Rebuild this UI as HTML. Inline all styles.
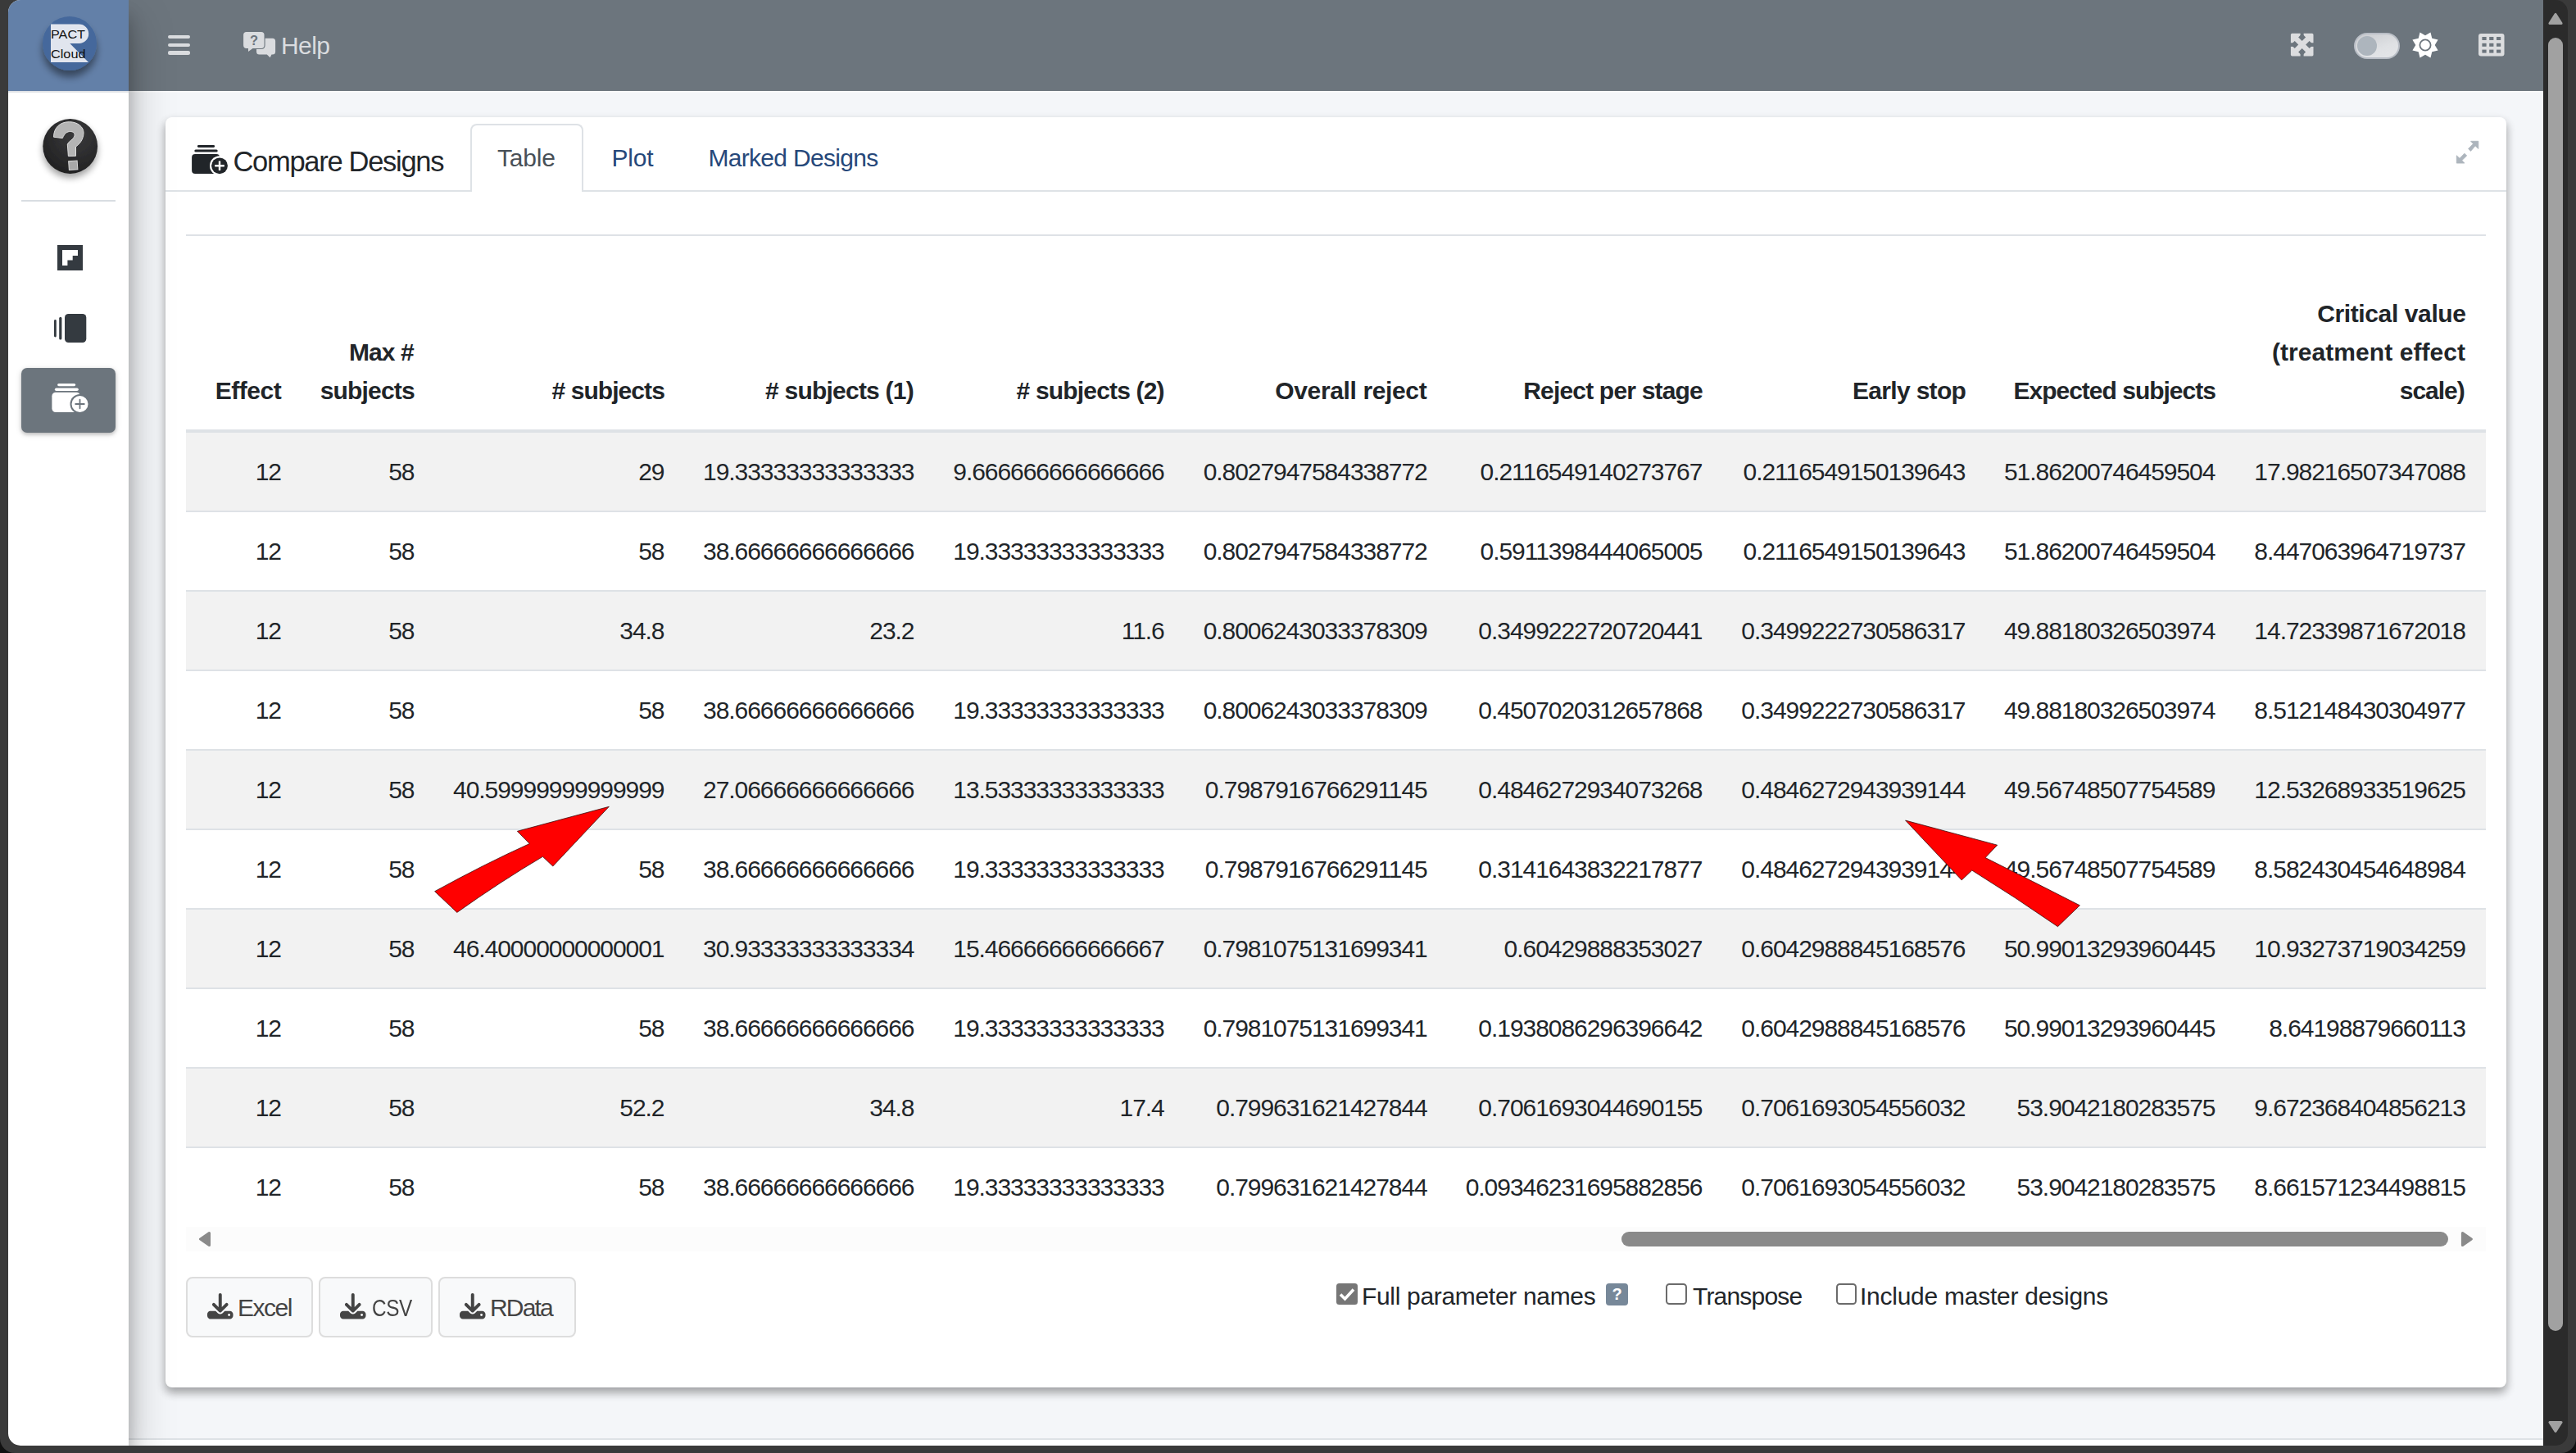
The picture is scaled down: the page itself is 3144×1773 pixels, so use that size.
<!DOCTYPE html><html><head><meta charset="utf-8"><style>
*{margin:0;padding:0;box-sizing:border-box}
html,body{width:3144px;height:1773px;overflow:hidden;background:#3a3a3a;font-family:"Liberation Sans",sans-serif;color:#212529}
.a{position:absolute}
#win{position:absolute;left:0;top:0;width:3144px;height:1773px;clip-path:inset(0px 10px 9px 10px round 15px);background:#2b2b2b}
.t{position:absolute;white-space:nowrap;line-height:1;}
.num{font-size:30px;letter-spacing:-1.05px;text-align:right;color:#212529}
.hdr{font-size:30px;letter-spacing:-0.40px;font-weight:bold;text-align:right;color:#212529}
</style></head><body><div class="a" style="left:0;top:0;width:3144px;height:1773px;background:#111"></div><div class="a" style="left:0;top:0;width:3144px;height:1773px;background:#3a3a3a;border-radius:0 0 18px 18px"></div><div id="win">
<div class="a" style="left:157px;top:111px;width:2947px;height:1644px;background:#f4f6f9"></div>
<div class="a" style="left:157px;top:1755px;width:2947px;height:9px;background:#fff;border-top:2px solid #dee2e6"></div>
<div class="a" style="left:157px;top:0;width:2947px;height:111px;background:#6c757d"></div>
<div class="a" style="left:157px;top:111px;width:2947px;height:2px;background:#f8f9fa"></div>
<div class="a" style="left:202px;top:143px;width:2857px;height:1550px;background:#fff;border-radius:8px;box-shadow:0 6px 12px rgba(0,0,0,.16),0 6px 12px rgba(0,0,0,.23)"></div>
<div class="a" style="left:202px;top:232px;width:2857px;height:2px;background:#dee2e6"></div>
<div class="a" style="left:574px;top:151px;width:138px;height:83px;background:#fff;border:2px solid #dee2e6;border-bottom:none;border-radius:8px 8px 0 0"></div>
<div class="a" style="left:227px;top:286px;width:2807px;height:2px;background:#dee2e6"></div>
<div class="a" style="left:227px;top:524px;width:2807px;height:4px;background:#dee2e6"></div>
<div class="a" style="left:227px;top:528px;width:2807px;height:95px;background:#f2f2f2"></div>
<div class="a" style="left:227px;top:623px;width:2807px;height:2px;background:#dee2e6"></div>
<div class="a" style="left:227px;top:625px;width:2807px;height:95px;background:#fff"></div>
<div class="a" style="left:227px;top:720px;width:2807px;height:2px;background:#dee2e6"></div>
<div class="a" style="left:227px;top:722px;width:2807px;height:95px;background:#f2f2f2"></div>
<div class="a" style="left:227px;top:817px;width:2807px;height:2px;background:#dee2e6"></div>
<div class="a" style="left:227px;top:819px;width:2807px;height:95px;background:#fff"></div>
<div class="a" style="left:227px;top:914px;width:2807px;height:2px;background:#dee2e6"></div>
<div class="a" style="left:227px;top:916px;width:2807px;height:95px;background:#f2f2f2"></div>
<div class="a" style="left:227px;top:1011px;width:2807px;height:2px;background:#dee2e6"></div>
<div class="a" style="left:227px;top:1013px;width:2807px;height:95px;background:#fff"></div>
<div class="a" style="left:227px;top:1108px;width:2807px;height:2px;background:#dee2e6"></div>
<div class="a" style="left:227px;top:1110px;width:2807px;height:95px;background:#f2f2f2"></div>
<div class="a" style="left:227px;top:1205px;width:2807px;height:2px;background:#dee2e6"></div>
<div class="a" style="left:227px;top:1207px;width:2807px;height:95px;background:#fff"></div>
<div class="a" style="left:227px;top:1302px;width:2807px;height:2px;background:#dee2e6"></div>
<div class="a" style="left:227px;top:1304px;width:2807px;height:95px;background:#f2f2f2"></div>
<div class="a" style="left:227px;top:1399px;width:2807px;height:2px;background:#dee2e6"></div>
<div class="a" style="left:227px;top:1401px;width:2807px;height:95px;background:#fff"></div>
<div class="t hdr" style="right:2800.6px;top:462.4px;letter-spacing:-0.440px">Effect</div>
<div class="t hdr" style="right:2639.1px;top:414.9px;letter-spacing:-0.875px">Max #</div>
<div class="t hdr" style="right:2638.2px;top:462.4px;letter-spacing:-0.829px">subjects</div>
<div class="t hdr" style="right:2333.1px;top:462.4px;letter-spacing:-0.934px"># subjects</div>
<div class="t hdr" style="right:2029.1px;top:462.4px;letter-spacing:-0.777px"># subjects (1)</div>
<div class="t hdr" style="right:1723.3px;top:462.4px;letter-spacing:-0.830px"># subjects (2)</div>
<div class="t hdr" style="right:1402.7px;top:462.4px;letter-spacing:-0.368px">Overall reject</div>
<div class="t hdr" style="right:1066.0px;top:462.4px;letter-spacing:-0.807px">Reject per stage</div>
<div class="t hdr" style="right:744.8px;top:462.4px;letter-spacing:-0.688px">Early stop</div>
<div class="t hdr" style="right:440.1px;top:462.4px;letter-spacing:-1.000px">Expected subjects</div>
<div class="t hdr" style="right:134.4px;top:367.5px;letter-spacing:-0.384px">Critical value</div>
<div class="t hdr" style="right:134.9px;top:414.9px;letter-spacing:0.064px">(treatment effect</div>
<div class="t hdr" style="right:136.4px;top:462.4px;letter-spacing:-1.040px">scale)</div>
<div class="t num" style="right:2801.0px;top:561.4px">12</div>
<div class="t num" style="right:2638.5px;top:561.4px">58</div>
<div class="t num" style="right:2333.5px;top:561.4px">29</div>
<div class="t num" style="right:2028.5px;top:561.4px">19.33333333333333</div>
<div class="t num" style="right:1723.3px;top:561.4px">9.666666666666666</div>
<div class="t num" style="right:1402.3px;top:561.4px">0.8027947584338772</div>
<div class="t num" style="right:1066.6px;top:561.4px">0.2116549140273767</div>
<div class="t num" style="right:745.6px;top:561.4px">0.2116549150139643</div>
<div class="t num" style="right:440.6px;top:561.4px">51.86200746459504</div>
<div class="t num" style="right:135.2px;top:561.4px">17.98216507347088</div>
<div class="t num" style="right:2801.0px;top:658.4px">12</div>
<div class="t num" style="right:2638.5px;top:658.4px">58</div>
<div class="t num" style="right:2333.5px;top:658.4px">58</div>
<div class="t num" style="right:2028.5px;top:658.4px">38.66666666666666</div>
<div class="t num" style="right:1723.3px;top:658.4px">19.33333333333333</div>
<div class="t num" style="right:1402.3px;top:658.4px">0.8027947584338772</div>
<div class="t num" style="right:1066.6px;top:658.4px">0.5911398444065005</div>
<div class="t num" style="right:745.6px;top:658.4px">0.2116549150139643</div>
<div class="t num" style="right:440.6px;top:658.4px">51.86200746459504</div>
<div class="t num" style="right:135.2px;top:658.4px">8.447063964719737</div>
<div class="t num" style="right:2801.0px;top:755.4px">12</div>
<div class="t num" style="right:2638.5px;top:755.4px">58</div>
<div class="t num" style="right:2333.5px;top:755.4px">34.8</div>
<div class="t num" style="right:2028.5px;top:755.4px">23.2</div>
<div class="t num" style="right:1723.3px;top:755.4px">11.6</div>
<div class="t num" style="right:1402.3px;top:755.4px">0.8006243033378309</div>
<div class="t num" style="right:1066.6px;top:755.4px">0.3499222720720441</div>
<div class="t num" style="right:745.6px;top:755.4px">0.3499222730586317</div>
<div class="t num" style="right:440.6px;top:755.4px">49.88180326503974</div>
<div class="t num" style="right:135.2px;top:755.4px">14.72339871672018</div>
<div class="t num" style="right:2801.0px;top:852.4px">12</div>
<div class="t num" style="right:2638.5px;top:852.4px">58</div>
<div class="t num" style="right:2333.5px;top:852.4px">58</div>
<div class="t num" style="right:2028.5px;top:852.4px">38.66666666666666</div>
<div class="t num" style="right:1723.3px;top:852.4px">19.33333333333333</div>
<div class="t num" style="right:1402.3px;top:852.4px">0.8006243033378309</div>
<div class="t num" style="right:1066.6px;top:852.4px">0.4507020312657868</div>
<div class="t num" style="right:745.6px;top:852.4px">0.3499222730586317</div>
<div class="t num" style="right:440.6px;top:852.4px">49.88180326503974</div>
<div class="t num" style="right:135.2px;top:852.4px">8.512148430304977</div>
<div class="t num" style="right:2801.0px;top:949.4px">12</div>
<div class="t num" style="right:2638.5px;top:949.4px">58</div>
<div class="t num" style="right:2333.5px;top:949.4px">40.59999999999999</div>
<div class="t num" style="right:2028.5px;top:949.4px">27.06666666666666</div>
<div class="t num" style="right:1723.3px;top:949.4px">13.53333333333333</div>
<div class="t num" style="right:1402.3px;top:949.4px">0.7987916766291145</div>
<div class="t num" style="right:1066.6px;top:949.4px">0.4846272934073268</div>
<div class="t num" style="right:745.6px;top:949.4px">0.4846272943939144</div>
<div class="t num" style="right:440.6px;top:949.4px">49.56748507754589</div>
<div class="t num" style="right:135.2px;top:949.4px">12.53268933519625</div>
<div class="t num" style="right:2801.0px;top:1046.3px">12</div>
<div class="t num" style="right:2638.5px;top:1046.3px">58</div>
<div class="t num" style="right:2333.5px;top:1046.3px">58</div>
<div class="t num" style="right:2028.5px;top:1046.3px">38.66666666666666</div>
<div class="t num" style="right:1723.3px;top:1046.3px">19.33333333333333</div>
<div class="t num" style="right:1402.3px;top:1046.3px">0.7987916766291145</div>
<div class="t num" style="right:1066.6px;top:1046.3px">0.3141643832217877</div>
<div class="t num" style="right:745.6px;top:1046.3px">0.4846272943939144</div>
<div class="t num" style="right:440.6px;top:1046.3px">49.56748507754589</div>
<div class="t num" style="right:135.2px;top:1046.3px">8.582430454648984</div>
<div class="t num" style="right:2801.0px;top:1143.3px">12</div>
<div class="t num" style="right:2638.5px;top:1143.3px">58</div>
<div class="t num" style="right:2333.5px;top:1143.3px">46.40000000000001</div>
<div class="t num" style="right:2028.5px;top:1143.3px">30.93333333333334</div>
<div class="t num" style="right:1723.3px;top:1143.3px">15.46666666666667</div>
<div class="t num" style="right:1402.3px;top:1143.3px">0.7981075131699341</div>
<div class="t num" style="right:1066.6px;top:1143.3px">0.60429888353027</div>
<div class="t num" style="right:745.6px;top:1143.3px">0.6042988845168576</div>
<div class="t num" style="right:440.6px;top:1143.3px">50.99013293960445</div>
<div class="t num" style="right:135.2px;top:1143.3px">10.93273719034259</div>
<div class="t num" style="right:2801.0px;top:1240.3px">12</div>
<div class="t num" style="right:2638.5px;top:1240.3px">58</div>
<div class="t num" style="right:2333.5px;top:1240.3px">58</div>
<div class="t num" style="right:2028.5px;top:1240.3px">38.66666666666666</div>
<div class="t num" style="right:1723.3px;top:1240.3px">19.33333333333333</div>
<div class="t num" style="right:1402.3px;top:1240.3px">0.7981075131699341</div>
<div class="t num" style="right:1066.6px;top:1240.3px">0.1938086296396642</div>
<div class="t num" style="right:745.6px;top:1240.3px">0.6042988845168576</div>
<div class="t num" style="right:440.6px;top:1240.3px">50.99013293960445</div>
<div class="t num" style="right:135.2px;top:1240.3px">8.64198879660113</div>
<div class="t num" style="right:2801.0px;top:1337.3px">12</div>
<div class="t num" style="right:2638.5px;top:1337.3px">58</div>
<div class="t num" style="right:2333.5px;top:1337.3px">52.2</div>
<div class="t num" style="right:2028.5px;top:1337.3px">34.8</div>
<div class="t num" style="right:1723.3px;top:1337.3px">17.4</div>
<div class="t num" style="right:1402.3px;top:1337.3px">0.799631621427844</div>
<div class="t num" style="right:1066.6px;top:1337.3px">0.7061693044690155</div>
<div class="t num" style="right:745.6px;top:1337.3px">0.7061693054556032</div>
<div class="t num" style="right:440.6px;top:1337.3px">53.9042180283575</div>
<div class="t num" style="right:135.2px;top:1337.3px">9.672368404856213</div>
<div class="t num" style="right:2801.0px;top:1434.3px">12</div>
<div class="t num" style="right:2638.5px;top:1434.3px">58</div>
<div class="t num" style="right:2333.5px;top:1434.3px">58</div>
<div class="t num" style="right:2028.5px;top:1434.3px">38.66666666666666</div>
<div class="t num" style="right:1723.3px;top:1434.3px">19.33333333333333</div>
<div class="t num" style="right:1402.3px;top:1434.3px">0.799631621427844</div>
<div class="t num" style="right:1066.6px;top:1434.3px">0.09346231695882856</div>
<div class="t num" style="right:745.6px;top:1434.3px">0.7061693054556032</div>
<div class="t num" style="right:440.6px;top:1434.3px">53.9042180283575</div>
<div class="t num" style="right:135.2px;top:1434.3px">8.661571234498815</div>
<div class="a" style="left:10px;top:0;width:147px;height:1764px;background:#fff;box-shadow:0 28px 56px rgba(0,0,0,.25),0 20px 20px rgba(0,0,0,.22);z-index:5"></div>
<div class="a" style="left:10px;top:0;width:147px;height:111px;background:#6380a8;z-index:6"></div>
<div class="a" style="left:10px;top:111px;width:147px;height:2px;background:#e0e3e7;z-index:6"></div>
<svg class="a" style="left:40px;top:8px;z-index:7;overflow:visible" width="92" height="100" viewBox="40 8 92 100">
<defs><filter id="sh" x="-50%" y="-50%" width="200%" height="200%"><feGaussianBlur in="SourceAlpha" stdDeviation="5"/><feOffset dy="8"/><feComponentTransfer><feFuncA type="linear" slope="0.45"/></feComponentTransfer><feMerge><feMergeNode/><feMergeNode in="SourceGraphic"/></feMerge></filter></defs>
<circle cx="85" cy="53" r="33" fill="#44689c" filter="url(#sh)"/>
<path d="M62 29.6 H96.5 A11.7 11.7 0 0 1 96.5 53 H85.3 L108 76 H62 Z" fill="#e1e5ee"/>
<text x="62" y="47" font-family="Liberation Sans" font-size="15.5" fill="#111" textLength="42" lengthAdjust="spacingAndGlyphs">PACT</text>
<text x="62" y="70.5" font-family="Liberation Sans" font-size="15.5" fill="#111" textLength="42.5" lengthAdjust="spacingAndGlyphs">Cloud</text>
</svg>
<svg class="a" style="left:30px;top:125px;z-index:7;overflow:visible" width="112" height="112" viewBox="30 125 112 112">
<defs><radialGradient id="hg" cx="0.6" cy="0.3" r="0.8"><stop offset="0" stop-color="#3a3a3c"/><stop offset="0.6" stop-color="#2a2a2b"/><stop offset="1" stop-color="#1e1e1f"/></radialGradient>
<filter id="sh2" x="-50%" y="-50%" width="200%" height="200%"><feGaussianBlur in="SourceAlpha" stdDeviation="4"/><feOffset dy="5"/><feComponentTransfer><feFuncA type="linear" slope="0.38"/></feComponentTransfer><feMerge><feMergeNode/><feMergeNode in="SourceGraphic"/></feMerge></filter></defs>
<circle cx="85.7" cy="178.5" r="33.4" fill="url(#hg)" filter="url(#sh2)"/>
<path d="M65.5 167.2 C65.5 156 73 148.7 84.5 148.7 C95 148.7 102 155 102 162 C102 170 97 176 92.5 179 L92.5 190.3 L83.4 190.6 L82.3 176 C84 172 90 170 91 166 C91.5 162 89 160.5 85.6 160.5 C82 160.5 79 162.5 76.3 168.6 Z" fill="#b4b4b4" stroke="#dcdcdc" stroke-width="1"/>
<rect x="84" y="196.4" width="10.5" height="10.7" fill="#a8a8a8" stroke="#d8d8d8" stroke-width="1" transform="rotate(-4 89 201.7)"/>
</svg>
<div class="a" style="left:26px;top:244px;width:115px;height:2px;background:#d9dde2;z-index:6"></div>
<svg class="a" style="left:70px;top:299px;z-index:6" width="31" height="31" viewBox="0 0 31 31"><rect width="31" height="31" fill="#343a40"/><path d="M6 6 H25 V13 H18.7 V18.6 H12.4 V25 H6 Z" fill="#fff"/></svg>
<svg class="a" style="left:66px;top:383px;z-index:6" width="40" height="35" viewBox="66 383 40 35"><rect x="66" y="390" width="2.8" height="21.5" rx="1.4" fill="#343a40"/><rect x="72.2" y="386.8" width="3.2" height="27.7" rx="1.6" fill="#343a40"/><rect x="79" y="383" width="26.3" height="35" rx="4.5" fill="#343a40"/></svg>
<div class="a" style="left:26px;top:449px;width:115px;height:79px;background:#6c757d;border-radius:7px;box-shadow:0 2px 4px rgba(0,0,0,.2),0 2px 8px rgba(0,0,0,.12);z-index:6"></div>
<svg class="a" style="left:60px;top:465px;z-index:7" width="52" height="42" viewBox="60 465 52 42"><rect x="70.1" y="467.9" width="22.1" height="3.3" rx="1.65" fill="#fff"/><rect x="66.9" y="473.4" width="28.9" height="3.5" rx="1.75" fill="#fff"/><rect x="63.4" y="478.7" width="34.4" height="24.3" rx="4.5" fill="#fff"/><circle cx="97.5" cy="493" r="12" fill="#6c757d"/><circle cx="97.5" cy="493" r="10" fill="#fff"/><path d="M97.5 487.7 V498.3 M92.2 493 H102.8" stroke="#6c757d" stroke-width="1.8" stroke-linecap="round"/></svg>
<div class="a" style="left:205px;top:43.0px;width:27.3px;height:4.2px;border-radius:2.1px;background:#dadcdf"></div>
<div class="a" style="left:205px;top:52.6px;width:27.3px;height:4.2px;border-radius:2.1px;background:#dadcdf"></div>
<div class="a" style="left:205px;top:62.4px;width:27.3px;height:4.2px;border-radius:2.1px;background:#dadcdf"></div>
<svg class="a" style="left:290px;top:30px" width="55" height="48" viewBox="290 30 55 48">
<path d="M316.5 46.7 H332.6 Q336.1 46.7 336.1 50.2 V62.9 Q336.1 66.4 332.6 66.4 H331.5 L329.6 70.2 L325.8 66.4 H316.5 Q313 66.4 313 62.9 V50.2 Q313 46.7 316.5 46.7 Z" fill="#dadcdf"/>
<path d="M300.8 38.9 H318.8 Q322.5 38.9 322.5 42.6 V55.2 Q322.5 58.9 318.8 58.9 H308.5 L303 63 V58.9 H300.8 Q297.1 58.9 297.1 55.2 V42.6 Q297.1 38.9 300.8 38.9 Z" fill="#dadcdf" stroke="#6c757d" stroke-width="2.2" paint-order="stroke"/>
<text x="305" y="55.3" font-family="Liberation Sans" font-weight="bold" font-size="16.5" fill="#6c757d">?</text>
</svg>
<div class="t" style="left:343px;top:40.5px;font-size:30px;letter-spacing:-0.6px;color:#dadcdf">Help</div>
<svg class="a" style="left:2790px;top:35px" width="40" height="40" viewBox="2790 35 40 40"><rect x="2795.9" y="40.8" width="27.6" height="27.6" rx="1.6" fill="#dcdddf"/><g fill="#6c757d"><polygon points="2809.6,41.1 2814.1,45.6 2809.6,50.1 2805.1,45.6"/><polygon points="2809.6,59.1 2814.1,63.6 2809.6,68.1 2805.1,63.6"/><polygon points="2800.7,50.1 2805.2,54.6 2800.7,59.1 2796.2,54.6"/><polygon points="2818.6,50.1 2823.1,54.6 2818.6,59.1 2814.1,54.6"/><rect x="2807.6" y="40" width="4" height="6"/><rect x="2807.6" y="63" width="4" height="6"/><rect x="2795" y="52.3" width="6" height="4.6"/><rect x="2818.5" y="52.3" width="6" height="4.6"/></g></svg>
<div class="a" style="left:2873px;top:40px;width:56px;height:32px;border-radius:16px;background:linear-gradient(160deg,#c9cbcf,#dfe1e4 60%,#e4e6e9);border:2px solid #b9bec6"></div>
<div class="a" style="left:2877px;top:44px;width:24px;height:24px;border-radius:12px;background:#adb5bd"></div>
<svg class="a" style="left:2942.1px;top:37.1px" width="36" height="36" viewBox="-18 -18 36 36"><polygon fill="#fff" points="0.00,-11.70 6.47,-15.61 8.27,-8.27 15.61,-6.47 11.70,0.00 15.61,6.47 8.27,8.27 6.47,15.61 0.00,11.70 -6.47,15.61 -8.27,8.27 -15.61,6.47 -11.70,0.00 -15.61,-6.47 -8.27,-8.27 -6.47,-15.61"/><circle r="6.6" fill="none" stroke="#6c757d" stroke-width="1.8"/></svg>
<svg class="a" style="left:3025px;top:41px" width="31.5" height="27.5" viewBox="0 0 31.5 27.5"><rect width="31.5" height="27.5" rx="3" fill="#dcdddf"/><g fill="#6c757d"><rect x="4.4" y="4" width="5.2" height="4"/><rect x="13.2" y="4" width="5.2" height="4"/><rect x="22" y="4" width="5.2" height="4"/><rect x="4.4" y="11.8" width="5.2" height="4"/><rect x="13.2" y="11.8" width="5.2" height="4"/><rect x="22" y="11.8" width="5.2" height="4"/><rect x="4.4" y="19.6" width="5.2" height="4"/><rect x="13.2" y="19.6" width="5.2" height="4"/><rect x="22" y="19.6" width="5.2" height="4"/></g></svg>
<svg class="a" style="left:3105px;top:10px" width="28" height="26" viewBox="3105 10 28 26"><polygon points="3112,28.5 3126,28.5 3119,17.5" fill="#a1a1a1" stroke="#a1a1a1" stroke-width="3.2" stroke-linejoin="round"/></svg>
<div class="a" style="left:3110px;top:46px;width:18px;height:1578px;border-radius:9px;background:#a1a1a1"></div>
<svg class="a" style="left:3105px;top:1728px" width="28" height="26" viewBox="3105 1728 28 26"><polygon points="3112,1735.5 3126,1735.5 3119,1746.5" fill="#a1a1a1" stroke="#a1a1a1" stroke-width="3.2" stroke-linejoin="round"/></svg>
<svg class="a" style="left:232px;top:174px" width="48" height="40" viewBox="232 174 48 40"><rect x="240.9" y="177.1" width="21.2" height="2.9" rx="1.45" fill="#212529"/><rect x="237.3" y="182.6" width="28.4" height="3" rx="1.5" fill="#212529"/><rect x="234.1" y="187.9" width="34" height="24.1" rx="4" fill="#212529"/><circle cx="268" cy="202.3" r="12" fill="#fff"/><circle cx="268" cy="202.3" r="9.9" fill="#212529"/><path d="M268 196.5 V208.1 M262.2 202.3 H273.8" stroke="#fff" stroke-width="2.4"/></svg>
<div class="t" style="left:284.5px;top:180px;font-size:34.5px;letter-spacing:-1.3px;color:#212529">Compare Designs</div>
<div class="t" style="left:607px;top:177.5px;font-size:30px;letter-spacing:-0.2px;color:#495057">Table</div>
<div class="t" style="left:746.5px;top:177.5px;font-size:30px;letter-spacing:-0.2px;color:#26487a">Plot</div>
<div class="t" style="left:864.5px;top:177.5px;font-size:30px;letter-spacing:-0.7px;color:#26487a">Marked Designs</div>
<svg class="a" style="left:2990px;top:165px" width="45" height="40" viewBox="2990 165 45 40"><g fill="#adb5bd" stroke="#adb5bd" stroke-width="0.8" stroke-linejoin="round"><path d="M3015.6 172.3 H3024.8 V181.5 L3021.1 177.9 L3015.5 184.4 L3012.6 181.5 L3018.5 175.6 Z"/><path d="M2998.3 199.1 V189.8 L3002 193.3 L3007.9 187.2 L3010.7 190 L3004.7 195.7 L3007.9 199.1 Z"/></g></svg>
<div class="a" style="left:227px;top:1497px;width:2807px;height:30px;background:#fcfcfc"></div>
<svg class="a" style="left:236px;top:1497px" width="28" height="30" viewBox="236 1497 28 30"><polygon points="255.4,1504.6 255.4,1519.4 244.6,1512" fill="#8a8a8a" stroke="#8a8a8a" stroke-width="3.2" stroke-linejoin="round"/></svg>
<svg class="a" style="left:2996px;top:1497px" width="28" height="30" viewBox="2996 1497 28 30"><polygon points="3005.5,1504.6 3005.5,1519.4 3016.3,1512" fill="#8a8a8a" stroke="#8a8a8a" stroke-width="3.2" stroke-linejoin="round"/></svg>
<div class="a" style="left:1979px;top:1503px;width:1009px;height:18px;border-radius:9px;background:#8a8a8a"></div>
<div class="a" style="left:227.4px;top:1558.3px;width:155.1px;height:74.2px;background:#f8f9fa;border:2px solid #ddd;border-radius:8px"></div>
<svg class="a" style="left:253.0px;top:1578px" width="31.5" height="31.5" viewBox="0 0 512 512"><path fill="#444" d="M288 32c0-17.7-14.3-32-32-32s-32 14.3-32 32V274.7l-73.4-73.4c-12.5-12.5-32.8-12.5-45.3 0s-12.5 32.8 0 45.3l128 128c12.5 12.5 32.8 12.5 45.3 0l128-128c12.5-12.5 12.5-32.8 0-45.3s-32.8-12.5-45.3 0L288 274.7V32zM64 352c-35.3 0-64 28.7-64 64v32c0 35.3 28.7 64 64 64H448c35.3 0 64-28.7 64-64V416c0-35.3-28.7-64-64-64H346.5l-45.3 45.3c-25 25-65.5 25-90.5 0L165.5 352H64zm368 56a24 24 0 1 1 0 48 24 24 0 1 1 0-48z"/></svg>
<div class="t" style="left:290.0px;top:1581px;font-size:30px;letter-spacing:-1.50px;color:#444">Excel</div>
<div class="a" style="left:389.3px;top:1558.3px;width:138.9px;height:74.2px;background:#f8f9fa;border:2px solid #ddd;border-radius:8px"></div>
<svg class="a" style="left:415.0px;top:1578px" width="31.5" height="31.5" viewBox="0 0 512 512"><path fill="#444" d="M288 32c0-17.7-14.3-32-32-32s-32 14.3-32 32V274.7l-73.4-73.4c-12.5-12.5-32.8-12.5-45.3 0s-12.5 32.8 0 45.3l128 128c12.5 12.5 32.8 12.5 45.3 0l128-128c12.5-12.5 12.5-32.8 0-45.3s-32.8-12.5-45.3 0L288 274.7V32zM64 352c-35.3 0-64 28.7-64 64v32c0 35.3 28.7 64 64 64H448c35.3 0 64-28.7 64-64V416c0-35.3-28.7-64-64-64H346.5l-45.3 45.3c-25 25-65.5 25-90.5 0L165.5 352H64zm368 56a24 24 0 1 1 0 48 24 24 0 1 1 0-48z"/></svg>
<div class="t" style="left:453.5px;top:1581px;font-size:30px;letter-spacing:-0.5px;color:#444;transform:scaleX(0.81);transform-origin:0 0">CSV</div>
<div class="a" style="left:535.4px;top:1558.3px;width:167.3px;height:74.2px;background:#f8f9fa;border:2px solid #ddd;border-radius:8px"></div>
<svg class="a" style="left:561.0px;top:1578px" width="31.5" height="31.5" viewBox="0 0 512 512"><path fill="#444" d="M288 32c0-17.7-14.3-32-32-32s-32 14.3-32 32V274.7l-73.4-73.4c-12.5-12.5-32.8-12.5-45.3 0s-12.5 32.8 0 45.3l128 128c12.5 12.5 32.8 12.5 45.3 0l128-128c12.5-12.5 12.5-32.8 0-45.3s-32.8-12.5-45.3 0L288 274.7V32zM64 352c-35.3 0-64 28.7-64 64v32c0 35.3 28.7 64 64 64H448c35.3 0 64-28.7 64-64V416c0-35.3-28.7-64-64-64H346.5l-45.3 45.3c-25 25-65.5 25-90.5 0L165.5 352H64zm368 56a24 24 0 1 1 0 48 24 24 0 1 1 0-48z"/></svg>
<div class="t" style="left:598.0px;top:1581px;font-size:30px;letter-spacing:-1.85px;color:#444">RData</div>
<svg class="a" style="left:1631px;top:1566px" width="26" height="26" viewBox="0 0 26 26"><rect width="26" height="26" rx="3.5" fill="#767676"/><path d="M5 13.5 L10.5 19 L21 7.5" fill="none" stroke="#fff" stroke-width="3.6"/></svg>
<div class="t" style="left:1662px;top:1567px;font-size:30px;letter-spacing:-0.32px;color:#212529">Full parameter names</div>
<div class="a" style="left:1960px;top:1566.3px;width:27px;height:27px;border-radius:4px;background:#778899;color:#fff;font-weight:bold;font-size:20px;line-height:27px;text-align:center">?</div>
<div class="a" style="left:2033px;top:1566px;width:25.6px;height:25.7px;border-radius:4.5px;border:2px solid #6b6b6b;background:#fff"></div>
<div class="t" style="left:2066px;top:1567px;font-size:30px;letter-spacing:-0.8px;color:#212529">Transpose</div>
<div class="a" style="left:2240.5px;top:1566px;width:25.6px;height:25.7px;border-radius:4.5px;border:2px solid #6b6b6b;background:#fff"></div>
<div class="t" style="left:2270px;top:1567px;font-size:30px;letter-spacing:-0.25px;color:#212529">Include master designs</div>
<svg class="a" style="left:0;top:0;z-index:20" width="3144" height="1773" viewBox="0 0 3144 1773">
<path d="M743.3 984.3 L674.8 1057 L662.4 1045.3 Q612 1075 557.8 1113.4 L530.6 1087.7 Q590 1055 646.3 1029.5 L631.4 1014.3 Z" fill="#f00" stroke="#3a1010" stroke-width="0.8"/>
<path d="M2325.6 1001.1 L2437.7 1031.2 L2423.1 1046.6 Q2480 1075 2538.4 1104.8 L2511.5 1130.7 Q2460 1095 2406.8 1062 L2394.2 1073.9 Z" fill="#f00" stroke="#3a1010" stroke-width="0.8"/>
</svg>
</div></body></html>
